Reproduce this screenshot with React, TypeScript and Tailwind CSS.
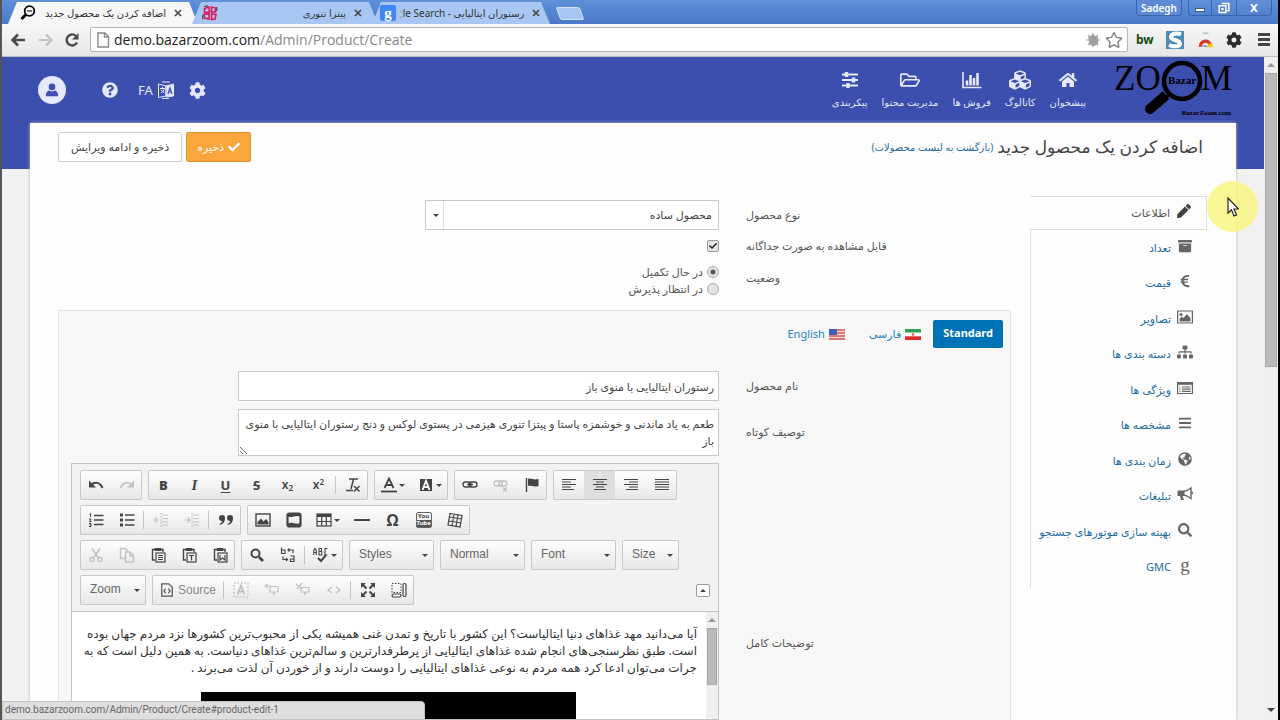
import React from "react";
import {
  FaArchive,
  FaBars,
  FaCheck,
  FaCog,
  FaCubes,
  FaEuroSign,
  FaGlobeAmericas,
  FaHome,
  FaPen,
  FaQuestionCircle,
  FaRegFolderOpen,
  FaRegStar,
  FaSearch,
  FaSitemap,
} from "react-icons/fa";

const Svg = ({
  children,
  className = "size-4",
  box = "0 0 16 16",
}: {
  children: React.ReactNode;
  className?: string;
  box?: string;
}) => (
  <svg viewBox={box} className={className} fill="none" stroke="currentColor" strokeWidth="1.4" aria-hidden="true">
    {children}
  </svg>
);

/* ---------- browser frame ---------- */

const TAB = "relative flex h-[22px] items-center px-4 text-[10px] text-[#333] [clip-path:polygon(0_100%,9px_0,calc(100%-9px)_0,100%_100%)]";

const TabClose = () => (
  <Svg className="ml-2 size-2 shrink-0 text-[#444]" box="0 0 8 8">
    <path d="m1 1 6 6M7 1 1 7" strokeWidth="1.6" />
  </Svg>
);

function Tabs() {
  return (
    <div className="flex h-6 items-end bg-linear-to-b from-[#6090d8] to-[#4a78c8] pl-1.5">
      <div className={TAB + " w-[190px] bg-[#f6f6f6]"}>
        <Svg className="-ml-1 mr-1 h-4 w-4 shrink-0 text-black">
          <circle cx="9.5" cy="6" r="4.8" strokeWidth="1.8" />
          <path d="M7 6h5" strokeWidth="1" />
          <path d="M6 9.5 1.5 14" strokeWidth="3" />
        </Svg>
        <span dir="rtl" className="flex-1 whitespace-nowrap">اضافه کردن یک محصول جدید</span>
        <TabClose />
      </div>
      <div className={TAB + " -ml-1.5 w-[186px] bg-[#a7c7f2]"}>
        <Svg className="-ml-1.5 h-4 w-4 shrink-0 text-[#e0175c]">
          <path d="m2.500 3.500 4.500-1.500.5 5L2.500 7.500zM9.500 2l4 1v4L9.500 7zM2 9.500l5-.5v5l-4.500-1zM9.500 9l4.500.5-1 4.500-3.500.5z" strokeWidth="1.600" />
          <path d="M2 1.500 6 .8M14.800 2v4M.8 10v4.500" stroke="#333" strokeWidth="1" />
        </Svg>
        <span dir="rtl" className="flex-1">پیتزا تنوری</span>
        <TabClose />
      </div>
      <div className={TAB + " -ml-1.5 w-[178px] bg-[#a7c7f2]"}>
        <span className="-ml-2 mr-1 flex size-4 shrink-0 items-center justify-center rounded-xs bg-[#4285f4] font-['Liberation_Serif',serif] text-[15px] leading-none font-bold text-white">
          g
        </span>
        <span className="flex-1 text-right whitespace-nowrap">
          <span className="text-[#7d90ad]">;</span>le Search - <bdi>رستوران ایتالیایی</bdi>
        </span>
        <TabClose />
      </div>
      <button aria-label="New tab" className="mb-1 ml-2 h-[13px] w-6 skew-x-[20deg] rounded-xs border border-[#d5e4fa] bg-[#a7c7f2]" />
      <div className="ml-auto flex self-start pr-1.5 text-[10px] text-white">
        <button className="mr-1.5 h-4 rounded-b border border-t-0 border-[#3b64ad] bg-[#5d8ad6] px-1 leading-none font-semibold">
          Sadegh
        </button>
        <button aria-label="Minimize" className="flex h-4 w-6 items-center justify-center rounded-bl border border-t-0 border-[#3b64ad]">
          <span className="mt-1 h-1 w-2.5 border border-[#3b5b99] bg-white" />
        </button>
        <button aria-label="Restore" className="flex h-4 w-6 items-center justify-center border-b border-[#3b64ad]">
          <Svg className="size-3">
            <rect x="1.5" y="5" width="9" height="9" strokeWidth="2" />
            <path d="M5 2h9.500v9.500H12" strokeWidth="2" />
            <rect x="5" y="8.500" width="2" height="2" strokeWidth="1" />
          </Svg>
        </button>
        <button aria-label="Close" className="flex h-4 w-9 items-center justify-center rounded-br border border-t-0 border-[#3b64ad]">
          <Svg className="size-2" box="0 0 8 8"><path d="m1 0 6 8M7 0 1 8" strokeWidth="2" /></Svg>
        </button>
      </div>
    </div>
  );
}

function AddressBar() {
  return (
    <div className="flex h-[33px] items-center border-b border-[#bdbdbd] bg-linear-to-b from-[#f7f7f7] to-[#e6e6e6] pr-2 pb-px pl-2">
      <button aria-label="Back" className="mr-3 text-[#4a4a4a]">
        <Svg><path d="M15 8H2.500M8 2.500 2.500 8 8 13.500" strokeWidth="2.600" /></Svg>
      </button>
      <button aria-label="Forward" className="mr-2.5 text-[#c4c4c4]">
        <Svg><path d="M1 8h12.500M8 2.500 13.500 8 8 13.500" strokeWidth="2.200" /></Svg>
      </button>
      <button aria-label="Reload" className="mr-2.5 text-[#4a4a4a]">
        <Svg><path d="M13 10.500A5.500 5.500 0 1 1 12 4" strokeWidth="2.400" /><path d="M14.500 1v6.500H8z" fill="currentColor" stroke="none" /></Svg>
      </button>
      <div className="flex h-[25px] min-w-0 flex-1 items-center rounded-xs border border-[#b5b5b5] bg-white px-1">
        <Svg className="mr-[3px] h-4 w-4 text-[#8a8a8a]"><path d="M3 1h7l3.500 3.500V15H3zM9.500 1v4h4" /></Svg>
        <div className="flex-1 font-['Open_Sans',sans-serif] text-[14px] leading-5 text-[#888]">
          <span className="text-[#222]">demo.bazarzoom.com</span>/Admin/Product/Create
        </div>
        <Svg className="mr-1 size-4 text-[#a0a0a0]">
          <path d="M8 1v14M1 8h14M3 3l10 10M13 3 3 13" strokeWidth="1.200" />
          <path d="M4 5.500 8 3l4.500 3v5L9 13.500 5 12z" fill="currentColor" />
        </Svg>
        <FaRegStar className="size-[18px] text-[#8a8a8a]" />
      </div>
      <div className="flex items-center gap-3 pl-2">
        <span className="w-[18px] text-[12px] leading-none font-bold text-[#10490f]">bw</span>
        <Svg className="size-[18px]" box="0 0 18 18">
          <path d="M0 0h18v18H0z" fill="#4d8cb5" stroke="none" />
          <path d="M15 3.500C11 1.500 5 2.500 5 6s9 3 9 6.500-6 3.500-11 1.500" stroke="#fff" strokeWidth="4" />
        </Svg>
        <Svg className="size-[18px]">
          <path d="M6 2h5" stroke="#bbb" />
          <path d="M4 14a4.500 4.500 0 0 1 4-5 4.500 4.500 0 0 1 4.500 3" stroke="#d8392f" strokeWidth="3" />
          <path d="M10.500 14a3 3 0 0 0-5 0" fill="#3f7fe0" stroke="none" />
          <path d="M9.500 14.500h5v-3.500h-3z" fill="#f4c20d" stroke="none" />
        </Svg>
        <FaCog className="size-4 text-[#2c2c2c]" />
        <button aria-label="Menu" className="ml-1 flex w-3 flex-col gap-0.5">
          <span className="h-[3px] bg-[#444]" />
          <span className="h-[3px] bg-[#444]" />
          <span className="h-[3px] bg-[#444]" />
        </button>
      </div>
    </div>
  );
}

/* ---------- admin header ---------- */

const BarChart = () => (
  <Svg className="size-5" box="0 0 20 20">
    <path d="M1 2v15.500h18.500" strokeWidth="1.600" />
    <path d="M5 15.500v-5M8.500 15.500V5M12 15.500V8M15.500 15.500V3" strokeWidth="2.600" />
  </Svg>
);

const Sliders = () => (
  <Svg className="size-[18px]" box="0 0 18 18">
    <path d="M1 3.500h16M1 9h16M1 14.500h16" strokeWidth="1.800" />
    <path d="M5.500 1v5M12.500 6.500v5M7 12v5" strokeWidth="3.400" />
  </Svg>
);

const NAV = [
  { label: "پیشخوان", icon: <FaHome className="size-[18px]" /> },
  { label: "کاتالوگ", icon: <FaCubes className="size-[22px]" /> },
  { label: "فروش ها", icon: <BarChart /> },
  { label: "مدیریت محتوا", icon: <FaRegFolderOpen className="size-5" /> },
  { label: "پیکربندی", icon: <Sliders /> },
];

const Logo = () => (
  <svg viewBox="0 0 120 60" direction="ltr" className="h-[60px] w-[120px]" role="img" aria-label="Bazar Zoom" fontFamily="Liberation Serif, serif">
    <text x="0" y="33" fontSize="35">ZO</text>
    <text x="87" y="33" fontSize="35">M</text>
    <circle cx="68" cy="24" r="18" fill="none" stroke="#000" strokeWidth="4.600" />
    <path d="m56 37-5 4" stroke="#000" strokeWidth="3" />
    <path d="m44 45-8 7" stroke="#000" strokeWidth="10" strokeLinecap="round" />
    <path d="m52 38-9 8" stroke="#000" strokeWidth="10" />
    <text x="68" y="27" fontSize="11" fontWeight="bold" textAnchor="middle">Bazar</text>
    <text x="117" y="58" fontSize="7" fontWeight="bold" textAnchor="end">BazarZoom.com</text>
  </svg>
);

function Header() {
  return (
    <header className="flex h-28 items-start bg-[#3c4eae] pr-[30px] pl-9 text-[#e6e9fb]">
      <Logo />
      <nav className="mr-7 flex gap-3.5 pt-3">
        {NAV.map((n) => (
          <a key={n.label} href="#nav" className="flex flex-col items-center gap-[3px] text-[10px] leading-4 whitespace-nowrap">
            <span className="flex h-[22px] items-center">{n.icon}</span>
            {n.label}
          </a>
        ))}
      </nav>
      <div dir="ltr" className="mr-auto flex items-center pt-[19px]">
        <button aria-label="Account" className="mr-9 flex size-7 items-center justify-center rounded-full bg-[#e6e9fb] text-[#3c4eae]">
          <Svg className="size-3.5">
            <circle cx="8" cy="4.500" r="3.800" fill="currentColor" stroke="none" />
            <path d="M1 15c0-5 2.500-6.500 4-6.500 1.500 1.500 4.500 1.500 6 0 1.500 0 4 1.500 4 6.500z" fill="currentColor" stroke="none" />
          </Svg>
        </button>
        <FaQuestionCircle className="mr-5 size-4" />
        <a href="#lang" className="mr-3.5 flex items-center gap-1 text-[13px] leading-4">
          FA
          <Svg className="size-[18px]" box="0 0 18 18">
            <path d="M1.500 3 9 5v10l-7.500 1.500zM9 5l7.500-2v12L9 16z" strokeWidth="1" />
            <path d="M9.500 5 16 3.500v11.500l-6.500.5z" fill="currentColor" stroke="none" />
            <path d="m11 13 2-6 2 6M11.500 11h3" stroke="#3c4eae" strokeWidth="1.200" />
            <path d="M3 7.500h5M5.500 6v1.500M4 12c2-1 3-2.500 3-4.500M4 9l3.500 3M5 1h8M5 17.500h7" strokeWidth="1" />
          </Svg>
        </a>
        <FaCog className="size-[17px]" />
      </div>
    </header>
  );
}

/* ---------- side menu ---------- */

const Picture = () => (
  <Svg>
    <path d="M.6 2h14.800v12H.6z" strokeWidth="1.200" />
    <circle cx="4" cy="5.500" r="1.500" fill="currentColor" stroke="none" />
    <path d="M2.500 12.500V10L5 7.500l1.500 1.500L10 5l3.500 4v3.500z" fill="currentColor" stroke="none" />
  </Svg>
);

const ListPanel = () => (
  <Svg>
    <path d="M.6 2.500h14.800v11H.6z" strokeWidth="1.200" />
    <path d="M.6 3.500h14.800" strokeWidth="2.600" />
    <path d="M2.500 7h1M5 7h8.500M2.500 9.200h1M5 9.200h8.500M2.500 11.400h1M5 11.400h8.500" strokeWidth="1.200" />
  </Svg>
);

const Bullhorn = () => (
  <Svg>
    <path d="M.5 4.500h7v5.500H5.500l1.500 4H4L3 10H.5z" fill="currentColor" stroke="none" />
    <path d="M7 5.500c3-.5 5-2 7-3.500v10.500c-2-1.500-4-3-7-3.500" strokeWidth="1.400" />
    <path d="M15.200 5.500v3" strokeWidth="1.200" />
  </Svg>
);

const MENU = [
  { label: "تعداد", icon: <FaArchive className="size-3.5" /> },
  { label: "قیمت", icon: <FaEuroSign className="size-3.5" /> },
  { label: "تصاویر", icon: <Picture /> },
  { label: "دسته بندی ها", icon: <FaSitemap className="size-4" /> },
  { label: "ویژگی ها", icon: <ListPanel /> },
  { label: "مشخصه ها", icon: <FaBars className="size-3.5" /> },
  { label: "زمان بندی ها", icon: <FaGlobeAmericas className="size-3.5" /> },
  { label: "تبلیغات", icon: <Bullhorn /> },
  { label: "بهینه سازی موتورهای جستجو", icon: <FaSearch className="size-3.5" /> },
  { label: "GMC", icon: <span className="font-['Liberation_Serif',serif] text-[19px] leading-4">g</span> },
];

function SideMenu() {
  return (
    <nav className="w-[177px] shrink-0 text-[11px]">
      <a href="#info" className="flex h-[34px] items-center gap-1.5 border border-l-0 border-[#ddd] pr-3.5 text-[#555]">
        <span className="flex w-4 shrink-0 justify-center pb-1 text-[#444]">
          <FaPen className="size-3.5" />
        </span>
        اطلاعات
      </a>
      <div className="flex h-[358px] flex-col border-l border-[#ddd] pr-3.5 pb-[3px]">
        {MENU.map((m) => (
          <a key={m.label} href="#product-edit" className="flex flex-1 items-center gap-1.5 whitespace-nowrap text-[#1f6e9e]">
            <span className="flex w-4 shrink-0 justify-center pb-1 text-[#666]">{m.icon}</span>
            {m.label}
          </a>
        ))}
      </div>
    </nav>
  );
}

/* ---------- rich text toolbar ---------- */

const GROUP = "flex h-[30px] items-center rounded-xs bg-linear-to-b from-white to-[#e6e6e6] text-[#444] ring-1 ring-[#c8c8c8] ring-inset";

const Caret = () => (
  <svg viewBox="0 0 6 3" className="ml-0.5 h-[3px] w-1.5 shrink-0" aria-hidden="true">
    <path d="M0 0h6L3 3z" fill="currentColor" />
  </svg>
);

const Btn = ({
  name,
  children,
  off,
  on,
  arrow,
}: {
  name: string;
  children: React.ReactNode;
  off?: boolean;
  on?: boolean;
  arrow?: boolean;
}) => (
  <button
    type="button"
    aria-label={name}
    className={
      (arrow ? "w-[37px] " : "w-[31px] ") +
      (on ? "bg-[#dedede] " : "") +
      (off ? "text-[#c2c2c2] " : "") +
      "flex h-7 items-center justify-center text-[13px] leading-none"
    }
  >
    {children}
    {arrow && <Caret />}
  </button>
);

const Sep = () => <span className="mx-px h-[18px] w-px shrink-0 bg-[#c4c4c4]" />;

const Combo = ({ label, width }: { label: string; width: string }) => (
  <div className={GROUP + " relative " + width}>
    <select
      aria-label={label}
      defaultValue={label}
      className="size-full appearance-none bg-transparent pb-0.5 pl-2.5 font-['Liberation_Sans',sans-serif] text-[12px] text-[#666]"
    >
      <option>{label}</option>
    </select>
    <span className="pointer-events-none absolute right-1.5 flex">
      <Caret />
    </span>
  </div>
);

const Align = ({ d }: { d: string }) => (
  <Svg><path d={d} strokeWidth="1.200" /></Svg>
);

const Paste = ({ mark }: { mark: React.ReactNode }) => (
  <Svg>
    <path d="M5 2.500H2.500v10.500H5M11 2.500h2V5" />
    <path d="M5 1.500h6v2H5z" fill="currentColor" strokeWidth="1" />
    <rect x="6" y="6" width="9" height="9" strokeWidth="1.200" />
    {mark}
  </Svg>
);

function Toolbar() {
  return (
    <div dir="ltr" className="flex flex-col gap-[5px] border-b border-[#c4c4c4] bg-[#f2f2f2] px-2 pt-1.5 pb-1.5">
      <div className="flex gap-1.5">
        <div className={GROUP}>
          <Btn name="Undo">
            <Svg><path d="M3.500 7.500C7 4.500 12 5 14.500 11" strokeWidth="2" /><path d="M1 3.500v7h7z" fill="currentColor" stroke="none" /></Svg>
          </Btn>
          <Btn name="Redo" off>
            <Svg><path d="M12.500 7.500C9 4.500 4 5 1.500 11" strokeWidth="1.600" /><path d="M15 3.500v7H8z" fill="currentColor" stroke="none" /></Svg>
          </Btn>
        </div>
        <div className={GROUP}>
          <Btn name="Bold"><b className="font-black">B</b></Btn>
          <Btn name="Italic"><i className="font-['Liberation_Serif',serif] text-[15px] font-bold">I</i></Btn>
          <Btn name="Underline"><b className="underline underline-offset-2">U</b></Btn>
          <Btn name="Strikethrough"><b className="line-through">S</b></Btn>
          <Btn name="Subscript"><span className="text-[12px] font-semibold">x<sub className="text-[8px]">2</sub></span></Btn>
          <Btn name="Superscript"><span className="text-[12px] font-semibold">x<sup className="text-[8px]">2</sup></span></Btn>
          <Sep />
          <Btn name="Remove format">
            <Svg><path d="M4 2h9M8.500 2 6 12M1 13.500h7M9 9l5.500 5.500M14.500 9 9 14.500" strokeWidth="1.500" /></Svg>
          </Btn>
        </div>
        <div className={GROUP}>
          <Btn name="Text color" arrow>
            <Svg><path d="M3.500 11 8 1.500l4.500 9.500M5 8h6" strokeWidth="1.800" /><path d="M0 14.500h16" strokeWidth="1.800" /></Svg>
          </Btn>
          <Btn name="Background color" arrow>
            <Svg><path d="M2 2h12v12H2z" fill="currentColor" stroke="none" /><path d="M4.500 13 8 3.500l3.500 9.500M5.500 10h5" stroke="#fff" strokeWidth="1.800" /></Svg>
          </Btn>
        </div>
        <div className={GROUP}>
          <Btn name="Link">
            <Svg><rect x="1" y="5" width="8" height="5" rx="2.500" /><rect x="7" y="5" width="8" height="5" rx="2.500" /><path d="M5 7.500h6" /></Svg>
          </Btn>
          <Btn name="Unlink" off>
            <Svg><rect x="1" y="4" width="8" height="5" rx="2.500" /><rect x="6" y="4" width="8" height="5" rx="2.500" /><path d="m10 10.500 4 4M14 10.500l-4 4" /></Svg>
          </Btn>
          <Btn name="Anchor">
            <Svg><path d="M2.500 1v14" /><path d="M4 2c3-1.500 5 1.500 10.500 0v7C9 10.500 7 8 4 9z" fill="currentColor" stroke="none" /></Svg>
          </Btn>
        </div>
        <div className={GROUP}>
          <Btn name="Align left"><Align d="M1 2.500h14M1 5h9M1 7.500h14M1 10h9M1 12.500h12" /></Btn>
          <Btn name="Center" on><Align d="M1 2.500h14M4 5h8M1 7.500h14M4 10h8M2 12.500h12" /></Btn>
          <Btn name="Align right"><Align d="M1 2.500h14M6 5h9M1 7.500h14M6 10h9M3 12.500h12" /></Btn>
          <Btn name="Justify"><Align d="M1 2.500h14M1 5h14M1 7.500h14M1 10h14M1 12.500h14" /></Btn>
        </div>
      </div>

      <div className="flex gap-1.5">
        <div className={GROUP}>
          <Btn name="Numbered list">
            <Svg><path d="M6 3.500h9.500M6 8h9.500M6 12.500h9.500" /><path d="M1.500 2l1-.5V5M1 7h2L1.500 9.500H3.500M1 11.500h2v3H1M1.500 13H3" strokeWidth="1" /></Svg>
          </Btn>
          <Btn name="Bulleted list">
            <Svg><path d="M6 3h9.500M6 8h9.500M6 13h9.500" /><path d="M1 3h3M1 8h3M1 13h3" strokeWidth="3" /></Svg>
          </Btn>
          <Sep />
          <Btn name="Outdent" off>
            <Svg><path d="M8 1v14" strokeDasharray="2 1" strokeWidth="1" /><path d="M9 3h6M9 6.500h6M9 10h6M9 13h6M1 8h5M4 5.500 1.500 8 4 10.500" strokeWidth="1.200" /></Svg>
          </Btn>
          <Btn name="Indent" off>
            <Svg><path d="M8 1v14" strokeDasharray="2 1" strokeWidth="1" /><path d="M9 3h6M9 6.500h6M9 10h6M9 13h6M1 8h5M3.500 5.500 6 8l-2.500 2.500" strokeWidth="1.200" /></Svg>
          </Btn>
          <Sep />
          <Btn name="Quote">
            <Svg>
              <path d="M1 6a3 3 0 1 1 6 0c0 4-2 6-5 7l-.5-1C3.500 11 4 10 4 9 2 9 1 8 1 6zM9 6a3 3 0 1 1 6 0c0 4-2 6-5 7l-.5-1c2-1 2.500-2 2.500-3-2 0-3-1-3-3z" fill="currentColor" stroke="none" />
            </Svg>
          </Btn>
        </div>
        <div className={GROUP}>
          <Btn name="Image">
            <Svg><rect x="1" y="2" width="14" height="12" /><path d="M2.500 12.500V10L6 6.500l2.500 3L11 7l2.500 3v2.500z" fill="currentColor" stroke="none" /></Svg>
          </Btn>
          <Btn name="Flash">
            <Svg><rect x="1.500" y="1.500" width="13" height="13" rx="2" strokeWidth="2.200" /><path d="M2 4.500c4 2 8-2 12 0V2H2zM2 11.500c4-2 8 1.500 12-.5V14H2z" fill="currentColor" stroke="none" /></Svg>
          </Btn>
          <Btn name="Table" arrow>
            <Svg><rect x="1" y="2" width="14" height="12" strokeWidth="1.200" /><path d="M1 3.500h14" strokeWidth="3" /><path d="M1 9.500h14M5.700 3v11M10.300 3v11" strokeWidth="1.200" /></Svg>
          </Btn>
          <Btn name="Horizontal line"><Svg><path d="M0 8h16" strokeWidth="2" /></Svg></Btn>
          <Btn name="Special character"><span className="text-[16px] font-bold">Ω</span></Btn>
          <Btn name="Video">
            <span className="flex w-4 flex-col items-center rounded-xs border border-[#666] text-[6px] leading-[7px] font-bold">
              You<span className="w-full bg-[#555] text-center text-white">Tube</span>
            </span>
          </Btn>
          <Btn name="IFrame">
            <Svg><path d="m3 1.500 12 2-2 11.500-12-2zM7 2 5 13.500M11 3 9 14.500M2.500 5l12 2M2 9l12 2" strokeWidth="1.200" /></Svg>
          </Btn>
        </div>
      </div>

      <div className="flex gap-1.5">
        <div className={GROUP}>
          <Btn name="Cut" off>
            <Svg><path d="m4 1.500 6.500 9.500M12 1.500 5.500 11" strokeWidth="1.600" /><circle cx="4" cy="12.500" r="2" /><circle cx="12" cy="12.500" r="2" /></Svg>
          </Btn>
          <Btn name="Copy" off>
            <Svg><path d="M6 11.500H1.500V1.500H6L9 4.500" /><path d="M6.500 5H11l3.500 3.500V15h-8zM11 5v4h3.500" /></Svg>
          </Btn>
          <Btn name="Paste"><Paste mark={<path d="M8 8.500h5M8 10.500h5M8 12.500h5" strokeWidth="1" />} /></Btn>
          <Btn name="Paste text"><Paste mark={<path d="M8 8.500h5M10.500 8.500v5" strokeWidth="1.200" />} /></Btn>
          <Btn name="Paste from Word"><Paste mark={<path d="M8 8v5l2.500-2 2.500 2V8" strokeWidth="1.200" />} /></Btn>
        </div>
        <div className={GROUP}>
          <Btn name="Find">
            <Svg><circle cx="6.500" cy="6.500" r="4" strokeWidth="2" /><path d="m10 10 4 4" strokeWidth="2.600" /></Svg>
          </Btn>
          <Btn name="Replace">
            <Svg><path d="M1.500.5v6H5V3H1.500M10.500 9H14v5.500h-3.500V12H14M8 3h5v3M9.500 1.500 8 3l1.500 1.500M3 9.500v3h4.500M6 11l1.500 1.500L6 14" strokeWidth="1.200" /></Svg>
          </Btn>
          <Sep />
          <Btn name="Spell check" arrow>
            <Svg>
              <path d="M.7 8V3.500l1.300-2 1.300 2V8M.7 5.500h2.600M6 8V1.500h2.500v3H6h2.700V8zM14.500 1.500H12V8h2.500" strokeWidth="1.100" />
              <path d="m5 11 3 3 5-6" strokeWidth="2" />
            </Svg>
          </Btn>
        </div>
        <Combo label="Styles" width="w-[85px]" />
        <Combo label="Normal" width="w-[85px]" />
        <Combo label="Font" width="w-[85px]" />
        <Combo label="Size" width="w-[57px]" />
      </div>

      <div className="flex gap-1.5">
        <Combo label="Zoom" width="w-[66px]" />
        <div className={GROUP}>
          <button type="button" className="flex h-7 w-[70px] items-center gap-1 pl-2 font-['Liberation_Sans',sans-serif] text-[12px] text-[#888]">
            <Svg className="size-3.5 text-[#555]"><path d="M2 1h8l4 4v10H2zM6.500 6.500 4.500 9l2 2.500M9.500 6.500l2 2.500-2 2.500" /></Svg>
            Source
          </button>
          <Sep />
          <Btn name="Select all" off>
            <Svg><rect x="1" y="1" width="14" height="14" strokeDasharray="1.500 2" /><path d="m4.500 12.500 3.500-9 3.500 9M6 9.500h4" strokeWidth="1.800" /></Svg>
          </Btn>
          <Btn name="Comment" off>
            <Svg><path d="M6 4.500h8v5.500h-3l-1.500 3V10H6zM1 4h5M3.500 2 1 4l2.500 2" strokeWidth="1.200" /></Svg>
          </Btn>
          <Btn name="Uncomment" off>
            <Svg><path d="M6 5.500h8V10h-3l-1.500 3V10H6zM1 2l6 5M7 1 2 7" strokeWidth="1.200" /></Svg>
          </Btn>
          <Btn name="Code" off>
            <Svg><path d="M6 5 2 8l4 3M10 5l4 3-4 3" /></Svg>
          </Btn>
          <Sep />
          <Btn name="Maximize">
            <Svg>
              <path d="m2 2 4.500 4.500M14 2 9.500 6.500M2 14l4.500-4.500M14 14 9.500 9.500" strokeWidth="2" />
              <path d="M1 1h5L1 6zM15 1v5l-5-5zM1 15v-5l5 5zM15 15h-5l5-5z" fill="currentColor" stroke="none" />
            </Svg>
          </Btn>
          <Btn name="Show blocks">
            <Svg><path d="M1 1.500h9v9H1z" strokeDasharray="1.500 1.500" strokeWidth="1" /><rect x="12" y="1.500" width="3" height="13" rx="1.500" strokeWidth="1.200" /><rect x="1" y="12" width="9" height="3" rx="1.500" strokeWidth="1.200" /></Svg>
          </Btn>
        </div>
        <button type="button" aria-label="Collapse toolbar" className="mb-2 ml-auto flex h-[13px] w-3.5 items-center justify-center self-end rounded-xs border border-[#999] bg-white text-[#444]">
          <svg viewBox="0 0 6 3" className="h-[3px] w-1.5" aria-hidden="true"><path d="M0 3h6L3 0z" fill="currentColor" /></svg>
        </button>
      </div>
    </div>
  );
}

const Scroll = ({ thumb }: { thumb: string }) => (
  <div className="flex w-full flex-1 flex-col items-center bg-[#efefef] px-px">
    <svg viewBox="0 0 8 4" className="my-1.5 h-1 w-2" aria-hidden="true"><path d="M0 4h8L4 0z" fill="#999" /></svg>
    <span className={"w-full border border-[#a8a8a8] bg-[#b9b9b9] " + thumb} />
  </div>
);

/* ---------- form ---------- */

const LABEL = "block w-[257px] shrink-0 text-left text-[11px] text-[#555]";
const FIELD = "border border-[#c9c9c9] bg-white text-[11px] text-[#444]";

function ProductForm() {
  return (
    <form className="flex min-w-0 flex-1 flex-col">
      <div className="flex items-center gap-[27px] pt-1 pr-2">
        <label htmlFor="type" className={LABEL}>نوع محصول</label>
        <div className={FIELD + " relative flex h-[30px] w-[294px] items-center"}>
          <select id="type" className="size-full appearance-none bg-transparent pr-1.5">
            <option>محصول ساده</option>
          </select>
          <span className="pointer-events-none absolute left-0 flex h-full w-[18px] items-center justify-center border-r border-[#ddd]">
            <Caret />
          </span>
        </div>
      </div>
      <div className="flex h-8 items-center gap-[27px] pr-2">
        <label htmlFor="visible" className={LABEL}>قابل مشاهده به صورت جداگانه</label>
        <span className="relative flex size-3">
          <input id="visible" type="checkbox" defaultChecked className="size-3 appearance-none rounded-xs border border-[#999] bg-[#e6e6e6]" />
          <FaCheck className="pointer-events-none absolute inset-0.5 size-2 text-[#222]" />
        </span>
      </div>
      <div role="radiogroup" aria-labelledby="state-label" className="flex h-12 items-start gap-[27px] pr-2">
        <span id="state-label" className={LABEL + " pt-2"}>وضعیت</span>
        <div className="flex flex-col pt-px text-[11px] leading-[17px] text-[#555]">
          <label className="flex items-center gap-1">
            <input type="radio" name="state" defaultChecked className="size-3 appearance-none rounded-full border border-[#aaa] bg-[radial-gradient(circle,#555_30%,#e4e4e4_40%)]" />
            در حال تکمیل
          </label>
          <label className="flex items-center gap-1">
            <input type="radio" name="state" className="size-3 appearance-none rounded-full border border-[#aaa] bg-[#e4e4e4]" />
            در انتظار پذیرش
          </label>
        </div>
      </div>

      <section className="flex flex-1 flex-col rounded-t-xs border border-b-0 border-[#e2e2e2] bg-[#f7f7f7] px-[7px] pt-[9px]">
        <div className="flex items-center text-[11px] text-[#1f82b8]">
          <button type="button" className="h-7 rounded-xs bg-[#0073b7] px-2.5 pb-0.5 font-bold text-white">Standard</button>
          <button type="button" className="mr-3 flex items-center gap-1">
            <svg viewBox="0 0 16 11" className="h-[11px] w-4" aria-hidden="true">
              <path d="M0 0h16v4H0z" fill="#2e9e4f" /><path d="M0 3.500h16v4H0z" fill="#fff" /><path d="M0 7.300h16V11H0z" fill="#e02a2a" /><circle cx="8" cy="5.500" r="1.300" fill="#e05050" />
            </svg>
            فارسی
          </button>
          <button type="button" className="mr-6 flex items-center gap-1">
            <svg viewBox="0 0 16 11" className="h-[11px] w-4" aria-hidden="true">
              <path d="M0 0h16v11H0z" fill="#f4d6d6" /><path d="M0 1h16M0 4h16M0 7h16M0 10h16" stroke="#d65a5a" strokeWidth="1.500" /><path d="M0 0h8v6H0z" fill="#3f5fb5" />
            </svg>
            English
          </button>
        </div>
        <div className="mt-[23px] flex items-center gap-[27px]">
          <label htmlFor="name" className={LABEL}>نام محصول</label>
          <input id="name" defaultValue="رستوران ایتالیایی با منوی باز" className={FIELD + " h-[30px] w-[481px] px-1"} />
        </div>
        <div className="mt-2 flex items-center gap-[27px]">
          <label htmlFor="short" className={LABEL}>توصیف کوتاه</label>
          <textarea
            id="short"
            defaultValue="طعم به یاد ماندنی و خوشمزه پاستا و پیتزا تنوری هیزمی در پستوی لوکس و دنج رستوران ایتالیایی با منوی باز"
            className={FIELD + " h-[47px] w-[481px] px-1 py-[5px] leading-[17px]"}
          />
        </div>
        <div className="mt-[7px] flex min-h-0 flex-1 gap-[27px]">
          <span className={LABEL + " pt-[172px]"}>توضیحات کامل</span>
          <div className="flex w-[648px] flex-col border border-[#c4c4c4] bg-white">
            <Toolbar />
            <div className="flex flex-1 overflow-hidden">
              <div className="flex w-3"><Scroll thumb="h-[57px]" /></div>
              <div className="flex min-w-0 flex-1 flex-col overflow-hidden pt-[13px] pr-[9px] text-[12px] leading-[17px] text-[#333]">
                <p className="whitespace-nowrap">
                  آیا می‌دانید مهد غذاهای دنیا ایتالیاست؟ این کشور با تاریخ و تمدن غنی همیشه یکی از محبوب‌ترین کشورها نزد مردم جهان بوده
                  <br />
                  است. طبق نظرسنجی‌های انجام شده غذاهای ایتالیایی از پرطرفدارترین و سالم‌ترین غذاهای دنیاست. به همین دلیل است که به
                  <br />
                  جرات می‌توان ادعا کرد همه مردم به نوعی غذاهای ایتالیایی را دوست دارند و از خوردن آن لذت می‌برند .
                </p>
                <div className="mt-4 mr-[121px] w-[375px] flex-1 bg-black" />
              </div>
            </div>
          </div>
        </div>
      </section>
    </form>
  );
}

export default function App() {
  return (
    <div className="relative flex h-screen flex-col overflow-hidden border-r-2 border-l-2 border-r-black border-l-[#555] bg-[#f1f1f1] font-['Noto_Sans','DejaVu_Sans',sans-serif]">
      <Tabs />
      <AddressBar />
      <div className="flex min-h-0 flex-1">
        <div dir="rtl" className="flex min-w-0 flex-1 flex-col">
          <Header />
          <main className="relative mx-7 -mt-[46px] flex min-h-0 flex-1 flex-col bg-[#fdfdfd] pt-[9px] pr-[29px] pl-7 shadow-[0_0_3px_#bbb]">
            <div className="flex h-[30px] items-center text-[11px]">
              <h1 className="mr-1 text-[17px] font-medium text-[#444]">اضافه کردن یک محصول جدید</h1>
              <a href="#list" className="mr-1 text-[10px] text-[#1f6e9e]">(بازگشت به لیست محصولات)</a>
              <button className="mr-auto flex h-[30px] items-center gap-1 rounded-xs border border-[#e0962e] bg-[#fba63c] px-2.5 text-white">
                <FaCheck className="size-3" />
                ذخیره
              </button>
              <button className="mr-1 h-[30px] rounded-xs border border-[#ccc] bg-white px-3 text-[#444]">ذخیره و ادامه ویرایش</button>
            </div>
            <div className="mt-[34px] flex min-h-0 flex-1 gap-[19px]">
              <SideMenu />
              <ProductForm />
            </div>
          </main>
        </div>
        <div className="flex w-3.5 flex-col items-center bg-[#efefef] pb-1">
          <Scroll thumb="h-[294px]" />
          <svg viewBox="0 0 8 4" className="mb-1 h-1 w-2" aria-hidden="true"><path d="M0 0h8L4 4z" fill="#444" /></svg>
        </div>
      </div>

      <div className="absolute bottom-0 left-0 h-[19px] w-[423px] rounded-tr border border-[#c4c4c4] bg-[#dedede] pl-0.5 font-['Roboto',sans-serif] text-[10px] leading-4 text-[#666]">
        demo.bazarzoom.com/Admin/Product/Create#product-edit-1
      </div>
      <div className="pointer-events-none absolute top-[181px] right-5 flex size-[51px] items-center justify-center rounded-full bg-[#f7f57a]/80">
        <svg viewBox="0 0 12 20" className="h-5 w-3" aria-hidden="true">
          <path d="M1 1v15l3.500-3.300L7 19l2.500-1L7 12h4.500z" fill="#fff" stroke="#222" strokeWidth="1.200" />
        </svg>
      </div>
    </div>
  );
}
